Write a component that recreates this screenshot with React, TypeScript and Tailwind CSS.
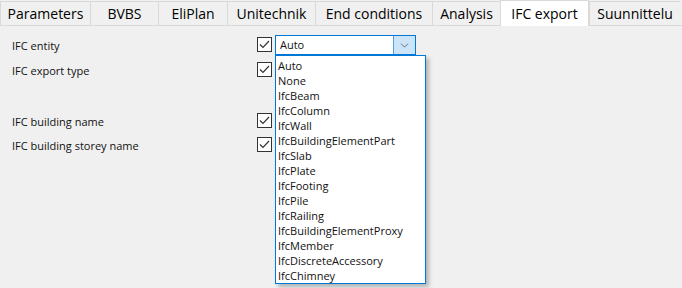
import { ChevronDown } from "lucide-react";

const tabs = [
  { name: "Parameters", w: 90 },
  { name: "BVBS", w: 68 },
  { name: "EliPlan", w: 69 },
  { name: "Unitechnik", w: 88 },
  { name: "End conditions", w: 117 },
  { name: "Analysis", w: 68 },
  { name: "IFC export", w: 89, active: true },
  { name: "Suunnittelu", w: 91 },
];

const entities = [
  "Auto",
  "None",
  "IfcBeam",
  "IfcColumn",
  "IfcWall",
  "IfcBuildingElementPart",
  "IfcSlab",
  "IfcPlate",
  "IfcFooting",
  "IfcPile",
  "IfcRailing",
  "IfcBuildingElementProxy",
  "IfcMember",
  "IfcDiscreteAccessory",
  "IfcChimney",
];

function Check() {
  return (
    <div className="w-[15px] h-[15px] border border-[#333] bg-white grid place-items-center">
      <svg width="11" height="9" viewBox="0 0 11 9">
        <path d="M1 4.5 L4 7.5 L10 1" fill="none" stroke="#333" strokeWidth="1.2" />
      </svg>
    </div>
  );
}

export default function App() {
  const font = { fontFamily: '"Open Sans", "Noto Sans", sans-serif' };
  return (
    <div className="w-[682px] h-[288px] bg-[#f0f0f0] relative overflow-hidden" style={font}>
      <div className="flex items-end h-[26px] border-b border-[#d9d9d9]">
        {tabs.map((t) =>
          t.active ? (
            <div
              key={t.name}
              className="h-[26px] bg-white border-x border-t border-[#d9d9d9] -mb-px flex items-center justify-center text-[14px] text-black"
              style={{ width: t.w }}
            >
              {t.name}
            </div>
          ) : (
            <div
              key={t.name}
              className="h-[24px] bg-[#f0f0f0] border-l border-t border-[#d9d9d9] flex items-center justify-center text-[14px] text-black"
              style={{ width: t.w }}
            >
              {t.name}
            </div>
          )
        )}
      </div>

      <div className="pl-[12px] pt-[11px] text-[11px] text-[#111]">
        <div className="flex h-[25px]">
          <div className="w-[245px] pt-px">IFC entity</div>
          <Check />
          <div className="ml-[3px] -mt-[2px] w-[141px] h-[20px] border border-[#0078d7] bg-white flex">
            <div className="flex-1 pl-[4px] leading-[18px]">Auto</div>
            <div className="w-[22px] h-full bg-[#cce4f7] border-l border-[#569de5] grid place-items-center">
              <ChevronDown size={13} strokeWidth={1.2} color="#333" />
            </div>
          </div>
        </div>
        <div className="flex h-[25px]">
          <div className="w-[245px] pt-px">IFC export type</div>
          <Check />
        </div>
        <div className="h-[26px]" />
        <div className="flex h-[24px]">
          <div className="w-[245px] pt-px">IFC building name</div>
          <Check />
        </div>
        <div className="flex h-[25px]">
          <div className="w-[245px] pt-px">IFC building storey name</div>
          <Check />
        </div>
      </div>

      <div className="absolute left-[275px] top-[55px] w-[151px] h-[229px] bg-white border border-[#0078d7] shadow-[3px_3px_4px_rgba(0,0,0,0.25)] pt-[2px] pl-[2px] text-[11px] text-[#111]">
        {entities.map((e) => (
          <div key={e} className="h-[15px] leading-[15px]">
            {e}
          </div>
        ))}
      </div>
    </div>
  );
}
